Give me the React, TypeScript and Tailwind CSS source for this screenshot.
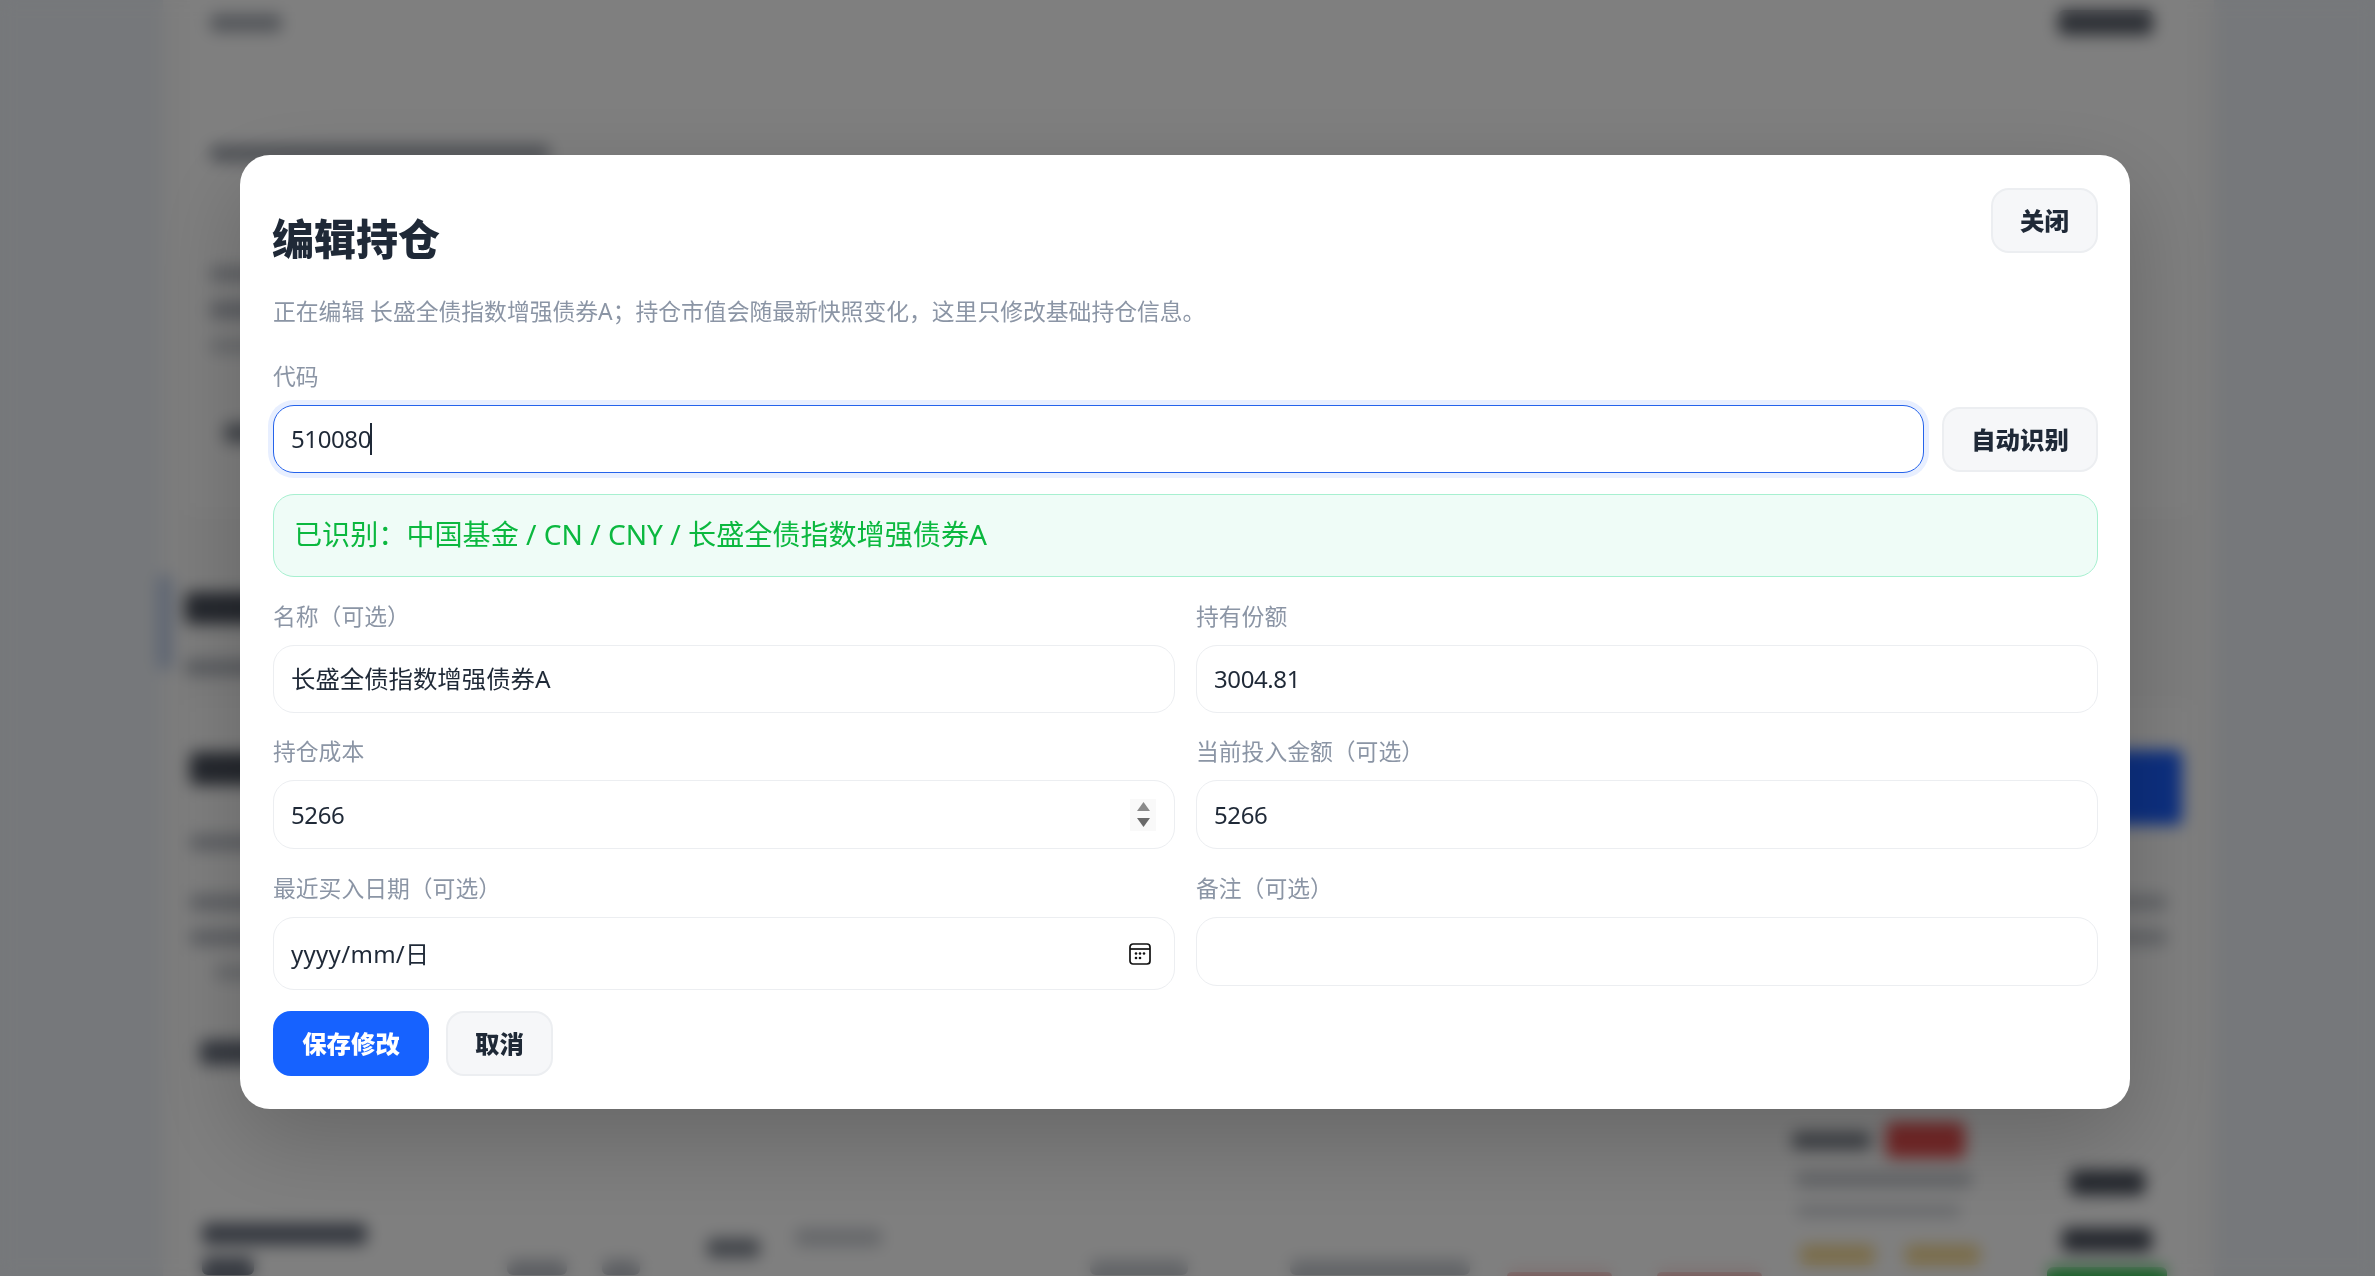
const Blob = ({ className }: { className: string }) => <div className={`rounded-md ${className}`} />;

const Label = ({ children }: { children: string }) => (
  <div className="mb-[11px] h-[34px] text-[22.8px] leading-[34px] text-[#8b95a5]">{children}</div>
);

const Field = ({
  label,
  value,
  height = "h-[68px]",
  textClass = "text-[24px] tracking-[-0.4px]",
  wrapClass = "",
  children,
}: {
  label: string;
  value?: string;
  height?: string;
  textClass?: string;
  wrapClass?: string;
  children?: React.ReactNode;
}) => (
  <div className={wrapClass}>
    <Label>{label}</Label>
    <div className={`${height} flex items-center justify-between rounded-[21px] border-[1.5px] border-[#eceef1] bg-white pl-[17px] pr-[19px] text-[#1f2937] ${textClass}`}>
      <span>{value}</span>
      {children}
    </div>
  </div>
);

const Spinner = () => (
  <div className="-mr-[1px] flex h-[32px] w-[26px] flex-col items-center justify-center gap-[7px] bg-[#f9f9f9]">
    <svg width="13" height="9" viewBox="0 0 13 9"><path d="M6.5 0L13 9H0z" fill="#8a8a8a" /></svg>
    <svg width="13" height="9" viewBox="0 0 13 9"><path d="M6.5 9L0 0h13z" fill="#6a6a6a" /></svg>
  </div>
);

const CalendarIcon = () => (
  <svg width="22" height="22" viewBox="0 0 22 22" className="mr-[4px]" fill="none">
    <rect x="1" y="1" width="20" height="20" rx="3" stroke="#111" strokeWidth="1.7" />
    <path d="M1 6h20" stroke="#111" strokeWidth="1.7" />
    <g fill="#111">
      <circle cx="7" cy="10.5" r="1.3" />
      <circle cx="11" cy="10.5" r="1.3" />
      <circle cx="15" cy="10.5" r="1.3" />
      <circle cx="7" cy="15" r="1.3" />
      <circle cx="11" cy="15" r="1.3" />
    </g>
  </svg>
);

const Button = ({ children, className }: { children: string; className: string }) => (
  <button className={`h-[65px] rounded-[18px] pt-[2px] text-[24.4px] font-black ${className}`}>{children}</button>
);

const BackgroundPage = () => (
  <div className="h-[1276px] overflow-hidden bg-[#edf1f6]">
    <main className="ml-[163px] h-[1276px] w-[2051px] bg-[#fbfbfb] px-[24px]">
      <section className="h-[510px] bg-white pl-[23px] pr-[37px] pt-[10px]">
        <div className="flex items-start justify-between">
          <Blob className="mt-[4px] h-[18px] w-[72px] bg-[#a8adb5]" />
          <Blob className="h-[25px] w-[95px] bg-[#5a606b]" />
        </div>
        <Blob className="mt-[110px] h-[17px] w-[340px] bg-[#a0a5ae]" />
        <Blob className="mt-[105px] h-[14px] w-[320px] bg-[#b8bcc4]" />
        <Blob className="mt-[20px] h-[18px] w-[320px] bg-[#b8bcc4]" />
        <Blob className="mt-[20px] h-[14px] w-[320px] bg-[#d0d3d8]" />
        <Blob className="ml-[14px] mt-[70px] h-[20px] w-[120px] bg-[#868c96]" />
      </section>
      <section className="h-[195px]">
        <div className="-ml-[30px] flex gap-[13px] pt-[65px]">
          <Blob className="h-[95px] w-[15px] bg-[#bccbe6]" />
          <div>
            <Blob className="mt-[17px] h-[32px] w-[200px] bg-[#4a505c]" />
            <Blob className="mt-[36px] h-[15px] w-[300px] bg-[#b0b5bd]" />
          </div>
        </div>
      </section>
      <section className="h-[571px] bg-white pl-[3px] pr-[8px] pt-[45px]">
        <div className="flex items-start justify-between">
          <Blob className="mt-[2px] h-[33px] w-[200px] bg-[#4a505c]" />
          <Blob className="h-[75px] w-[200px] rounded-[16px] bg-[#1a5fff]" />
        </div>
        <Blob className="mt-[10px] h-[15px] w-[320px] bg-[#b8bcc4]" />
        <div className="mt-[45px] flex justify-between">
          <Blob className="h-[15px] w-[320px] bg-[#b8bcc4]" />
          <Blob className="mr-[15px] h-[15px] w-[100px] bg-[#c4c8ce]" />
        </div>
        <div className="mt-[20px] flex justify-between">
          <Blob className="h-[15px] w-[320px] bg-[#b8bcc4]" />
          <Blob className="mr-[15px] h-[15px] w-[100px] bg-[#c4c8ce]" />
        </div>
        <Blob className="ml-[25px] mt-[20px] h-[15px] w-[200px] bg-[#d0d3d8]" />
        <Blob className="ml-[10px] mt-[60px] h-[25px] w-[150px] bg-[#6b7280]" />
        <div className="mt-[57px] flex items-start">
          <div className="ml-[12px] w-[305px] pt-[101px]">
            <Blob className="h-[22px] w-[165px] bg-[#6b7280]" />
            <Blob className="mt-[12px] h-[18px] w-[52px] bg-[#6b7280]" />
          </div>
          <Blob className="mt-[138px] h-[15px] w-[60px] bg-[#b8bcc4]" />
          <Blob className="ml-[35px] mt-[138px] h-[15px] w-[38px] bg-[#b8bcc4]" />
          <Blob className="ml-[67px] mt-[116px] h-[20px] w-[53px] bg-[#868c96]" />
          <Blob className="ml-[35px] mt-[106px] h-[19px] w-[87px] bg-[#ced1d6]" />
          <Blob className="ml-[208px] mt-[138px] h-[15px] w-[98px] bg-[#c4c8ce]" />
          <Blob className="ml-[102px] mt-[138px] h-[15px] w-[180px] bg-[#c4c8ce]" />
          <Blob className="ml-[37px] mt-[150px] h-[9px] w-[105px] bg-[#f0a8a8]" />
          <Blob className="ml-[45px] mt-[150px] h-[9px] w-[105px] bg-[#f0a8a8]" />
          <div className="ml-[30px] w-[255px] shrink-0">
            <div className="flex items-center gap-[15px]">
              <Blob className="h-[17px] w-[79px] bg-[#7a808a]" />
              <Blob className="h-[36px] w-[79px] rounded-[10px] bg-[#ea5050]" />
            </div>
            <Blob className="ml-[4px] mt-[14px] h-[15px] w-[176px] bg-[#c4c8ce]" />
            <Blob className="ml-[4px] mt-[18px] h-[12px] w-[165px] bg-[#d0d3d8]" />
            <div className="ml-[8px] mt-[28px] flex gap-[30px]">
              <Blob className="h-[20px] w-[75px] bg-[#f5d890]" />
              <Blob className="h-[20px] w-[75px] bg-[#f5d890]" />
            </div>
          </div>
          <div className="w-[120px] shrink-0 pt-[48px]">
            <Blob className="ml-[23px] h-[25px] w-[75px] bg-[#4a505c]" />
            <Blob className="ml-[15px] mt-[33px] h-[24px] w-[90px] bg-[#4a505c]" />
            <Blob className="mt-[15px] h-[30px] w-[120px] bg-[#2fc04e]" />
          </div>
        </div>
      </section>
    </main>
  </div>
);

export default function App() {
  return (
    <div className="relative h-[1276px] overflow-hidden font-['Noto_Sans','Noto_Sans_CJK_SC',sans-serif]">
      <BackgroundPage />
      <div className="absolute inset-0 bg-black/50 pl-[240px] pt-[155px] backdrop-blur-[8px]">
        <div className="h-[954px] w-[1890px] rounded-[30px] bg-white pl-[33px] pr-[32px] pt-[33px] shadow-[0_30px_90px_rgba(0,0,0,0.2)]">
          <header className="flex h-[141px] items-start justify-between">
            <div>
              <h2 className="-ml-[1px] mt-[26px] text-[42px] font-black leading-[50px] text-[#1f2937]">编辑持仓</h2>
              <p className="mt-[31px] text-[22.8px] leading-[34px] text-[#8b95a5]">
                正在编辑 长盛全债指数增强债券A；持仓市值会随最新快照变化，这里只修改基础持仓信息。
              </p>
            </div>
            <Button className="w-[107px] border-2 border-[#eceef1] bg-[#f6f7f9] text-[#1f2937]">关闭</Button>
          </header>
          <div className="mt-[31px]">
            <Label>代码</Label>
            <div className="flex items-center gap-[18px]">
              <div className="flex h-[68px] flex-1 items-center rounded-[21px] border-[1.5px] border-[#2563eb] bg-white pl-[17px] text-[24px] tracking-[-0.4px] text-[#1f2937] shadow-[0_0_0_5px_#e8efff]">
                510080
                <span className="-ml-[1px] h-[32px] w-[2px] bg-[#1f2937]" />
              </div>
              <Button className="w-[156px] border-2 border-[#eceef1] bg-[#f6f7f9] text-[#1f2937]">自动识别</Button>
            </div>
          </div>
          <div className="mt-[21px] flex h-[83px] items-center rounded-[21px] border-[1.5px] border-[#a7f0d0] bg-[#effcf7] pb-[2px] pl-[20px] text-[28.1px] text-[#0bb83f]">
            已识别：中国基金 / CN / CNY / 长盛全债指数增强债券A
          </div>
          <div className="mt-[23px] grid grid-cols-2 items-start gap-x-[21px] gap-y-[22px]">
            <Field label="名称（可选）" value="长盛全债指数增强债券A" textClass="text-[24.4px]" />
            <Field label="持有份额" value="3004.81" />
            <Field label="持仓成本" value="5266" height="h-[69px]">
              <Spinner />
            </Field>
            <Field label="当前投入金额（可选）" value="5266" height="h-[69px]" />
            <Field label="最近买入日期（可选）" value="yyyy/mm/日" height="h-[73px]" textClass="text-[24px] tracking-[0.3px]" wrapClass="mt-[1px]">
              <CalendarIcon />
            </Field>
            <Field label="备注（可选）" height="h-[69px]" wrapClass="mt-[1px]" />
          </div>
          <div className="mt-[21px] flex gap-[17px]">
            <Button className="w-[156px] bg-[#1662ff] text-white">保存修改</Button>
            <Button className="w-[107px] border-2 border-[#eceef1] bg-[#f6f7f9] text-[#1f2937]">取消</Button>
          </div>
        </div>
      </div>
    </div>
  );
}
